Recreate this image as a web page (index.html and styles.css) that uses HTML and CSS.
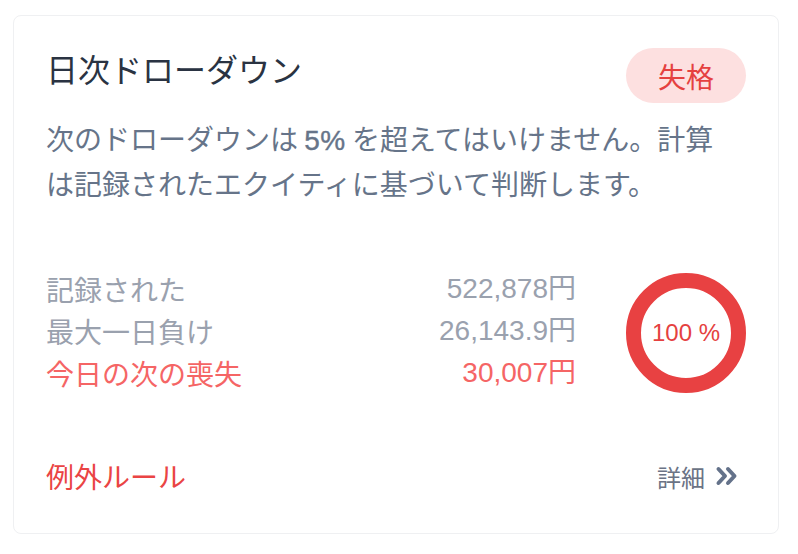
FILE: index.html
```html
<!DOCTYPE html>
<html lang="ja">
<head>
<meta charset="utf-8">
<link rel="stylesheet" href="styles.css">
</head>
<body>
<div class="card">
  <div class="header">
    <h2 class="title">日次ドローダウン</h2>
    <span class="badge">失格</span>
  </div>
  <p class="desc">次のドローダウンは <span class="strong">5%</span> を超えてはいけません。計算は記録されたエクイティに基づいて判断します。</p>
  <div class="stats">
    <div class="table">
      <div class="row"><span>記録された</span><span class="num">522,878円</span></div>
      <div class="row"><span>最大一日負け</span><span class="num">26,143.9円</span></div>
      <div class="row loss"><span>今日の次の喪失</span><span class="num">30,007円</span></div>
    </div>
    <div class="gauge">
      <svg width="120" height="120" viewBox="0 0 120 120">
        <circle cx="60" cy="60" r="52.5" fill="none" stroke="#e84142" stroke-width="15"/>
      </svg>
      <span class="pct">100 %</span>
    </div>
  </div>
  <div class="footer">
    <span class="rules">例外ルール</span>
    <span class="more">詳細
      <svg width="24" height="20" viewBox="0 0 24 20"><path d="M3.5 3 L10 10 L3.5 17 M13 3 L19.5 10 L13 17" fill="none" stroke="#64728a" stroke-width="4" stroke-linecap="round" stroke-linejoin="round"/></svg>
    </span>
  </div>
</div>
</body>
</html>
```
FILE: styles.css
```css
html, body {
  margin: 0;
  padding: 0;
  background: #ffffff;
}
body {
  font-family: "Noto Sans CJK JP", "Noto Sans", sans-serif;
}
.card {
  margin: 15px 19px 0 13px;
  border: 1px solid #eff0f2;
  border-radius: 8px;
  padding: 32px;
  background: #fff;
}
.header {
  display: flex;
  justify-content: space-between;
  align-items: flex-start;
}
.title {
  margin: 0;
  font-size: 32px;
  line-height: 40px;
  font-weight: 400;
  color: #2a3342;
}
.badge {
  display: flex;
  align-items: center;
  justify-content: center;
  width: 120px;
  height: 55px;
  border-radius: 28px;
  background: #fde0e0;
  color: #e5413f;
  font-size: 28px;
}
.desc {
  margin: 14px 24px 0 0;
  font-size: 28px;
  line-height: 42px;
  color: #667489;
}
.strong {
  font-family: "Liberation Sans", "Noto Sans CJK JP", sans-serif;
  font-weight: 400;
  letter-spacing: 0.5px;
  -webkit-text-stroke: 0.4px #667489;
}
.stats {
  display: flex;
  align-items: flex-start;
  margin-top: 64px;
}
.table {
  flex: 1;
}
.row {
  display: flex;
  justify-content: space-between;
  font-size: 28px;
  line-height: 42px;
  color: #9aa1ae;
}
.num {
  font-family: "Liberation Sans", "Noto Sans CJK JP", sans-serif;
}
.row.loss {
  color: #f56565;
}
.gauge {
  width: 120px;
  height: 120px;
  margin: 5px 0 0 50px;
  display: grid;
  place-items: center;
}
.gauge svg,
.gauge .pct {
  grid-area: 1 / 1;
}
.pct {
  font-family: "Liberation Sans", "Noto Sans CJK JP", sans-serif;
  font-size: 24px;
  color: #e5413f;
}
.footer {
  display: flex;
  justify-content: space-between;
  align-items: center;
  margin-top: 60px;
  height: 44px;
  padding-bottom: 3px;
}
.rules {
  font-size: 28px;
  color: #ea4444;
}
.more {
  display: flex;
  align-items: center;
  gap: 10px;
  font-size: 24px;
  color: #6b7385;
  margin-right: 7px;
}
```
